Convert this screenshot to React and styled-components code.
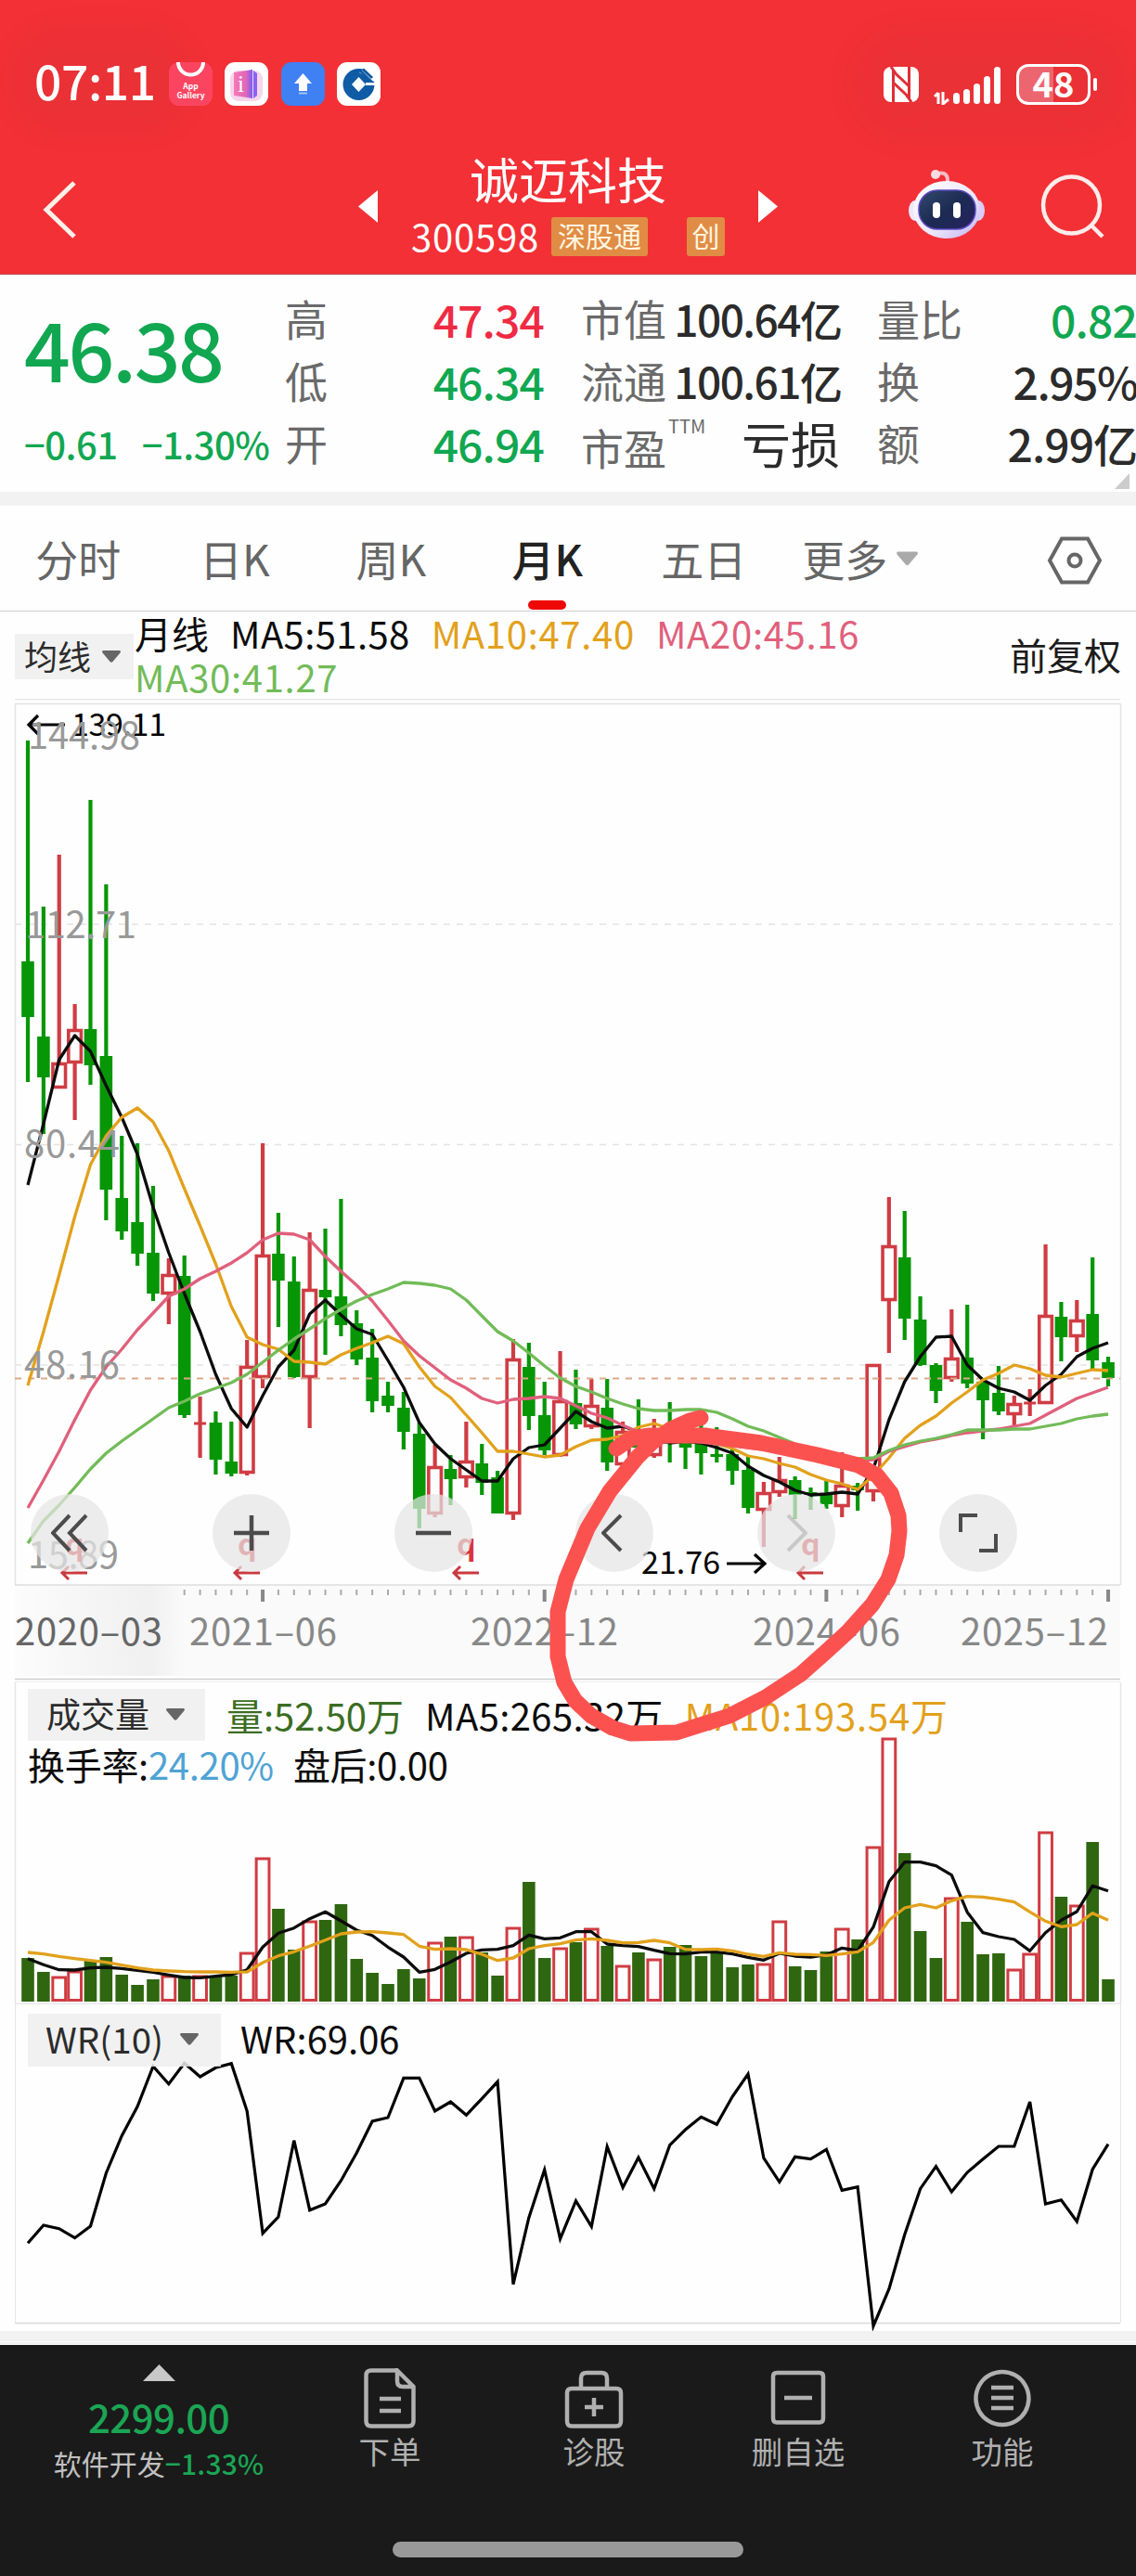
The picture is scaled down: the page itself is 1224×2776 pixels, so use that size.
import styled, { createGlobalStyle } from "styled-components";

const colors = {
    header: "#f23036",
    up: "#ef2b43",
    down: "#11a751",
    dark: "#2b2b2b",
    label: "#6a6a6a",
    candleUp: "#d03c43",
    candleDown: "#069606",
    volDown: "#2f6610",
    ma10: "#e2a11c",
    ma20: "#e0607c",
    ma30: "#72bb58",
    band: "#f2f2f2",
    nav: "#1a1a1a",
    navText: "#b0b0b0",
};

const GlobalStyle = createGlobalStyle`
    * { box-sizing: border-box; }
    body {
        margin: 0;
        background: #ffffff;
        font-family: "Noto Sans CJK SC", "Open Sans", sans-serif;
    }
    svg { display: block; }
    svg text { font-family: "Noto Sans CJK SC", "Open Sans", sans-serif; }
`;

const Page = styled.main`
    position: relative;
    width: 1224px;
    height: 2776px;
    overflow: hidden;
    background: #fefefe;
`;

/* ---------- Header ---------- */

const Header = styled.header`
    height: 296px;
    background: ${colors.header};
    color: #fff;
    border-bottom: 1px solid #b9484c;
`;

const StatusBar = styled.div`
    display: flex;
    justify-content: space-between;
    align-items: center;
    height: 160px;
    padding: 21px 42px 0 37px;
`;

const StatusGroup = styled.div`
    display: flex;
    align-items: center;
    border-radius: 40px;
    background: ${(p) => (p.$shade ? "rgba(120, 60, 60, 0.06)" : "none")};
    box-shadow: ${(p) => (p.$shade ? "0 0 40px 30px rgba(120, 60, 60, 0.06)" : "none")};
`;

const Clock = styled.div`
    width: 145px;
    height: 60px;
    margin-top: -9px;
    font-size: 51.5px;
    line-height: 60px;
    letter-spacing: -0.4px;
    font-weight: 500;
    border-radius: 30px;
    background: rgba(120, 60, 60, 0.06);
    box-shadow: 0 0 34px 24px rgba(120, 60, 60, 0.06);
`;

const AppIcons = styled.div`
    display: flex;
    gap: 13.4px;
`;

const SignalBox = styled.div`
    margin: 3px 0 0 16px;
`;

const Battery = styled.div`
    position: relative;
    width: 80px;
    height: 44px;
    margin: 0 7px 0 16px;
    border: 3.5px solid #fff;
    border-radius: 13px;
    background: linear-gradient(90deg, #ec6670 50%, transparent 50%);
    font-size: 38px;
    line-height: 33px;
    font-weight: 700;
    text-align: center;
    &::after {
        content: "";
        position: absolute;
        right: -10px;
        top: 12px;
        width: 4px;
        height: 14px;
        border-radius: 2px;
        background: #fff;
    }
`;

const TitleBar = styled.div`
    display: grid;
    grid-template-columns: 386px 452px 386px;
    height: 135px;
`;

const TitleSide = styled.div`
    display: flex;
    align-items: flex-start;
    justify-content: ${(p) => (p.$right ? "flex-end" : "flex-start")};
    gap: 60px;
    padding: ${(p) => (p.$right ? "22px 33px 0 0" : "35px 0 0 45px")};
`;

const SearchBox = styled.div`
    padding-top: 6px;
`;

const TitleCenter = styled.div`
    display: grid;
    grid-template-columns: 21px 1fr 21px;
`;

const SwitchArrow = styled.div`
    padding-top: 45px;
`;

const StockTitle = styled.div`
    display: flex;
    flex-direction: column;
    align-items: center;
`;

const StockName = styled.h1`
    margin: 0;
    font-size: 53px;
    line-height: 64px;
    font-weight: 400;
`;

const StockCode = styled.div`
    display: flex;
    align-items: center;
    font-size: 40px;
    line-height: 61px;
    letter-spacing: 0.8px;
    width: 338px;
`;

const Tag = styled.span`
    width: ${(p) => p.$w}px;
    margin-left: ${(p) => p.$left}px;
    height: 42px;
    border-radius: 3px;
    background: #e18c45;
    color: #fff6e0;
    font-size: 30px;
    line-height: 38px;
    letter-spacing: 0;
    text-align: center;
`;

/* ---------- Quote ---------- */

const Quote = styled.section`
    position: relative;
    display: grid;
    grid-template-columns: 307px 278px 320px 319px;
    height: 234px;
    padding-top: 14px;
`;

const PriceBox = styled.div`
    padding-left: 26px;
    color: ${colors.down};
`;

const Price = styled.div`
    font-size: 87.5px;
    line-height: 128px;
    font-weight: 500;
    letter-spacing: -2.4px;
`;

const Change = styled.div`
    display: flex;
    gap: 26px;
    font-size: 40px;
    line-height: 81px;
    font-weight: 500;
    letter-spacing: -0.5px;
    white-space: nowrap;
`;

const StatColumn = styled.div`
    padding-left: ${(p) => p.$left}px;
`;

const Stat = styled.div`
    display: flex;
    justify-content: space-between;
    height: 67px;
    line-height: 67px;
    white-space: nowrap;
`;

const StatLabel = styled.span`
    color: ${colors.label};
    font-size: 46px;
    line-height: 64px;
    padding-top: ${(p) => p.$drop || 0}px;
`;

const Ttm = styled.sup`
    margin-left: 2px;
    font-size: 20px;
    line-height: 20px;
    vertical-align: 34px;
`;

const StatValue = styled.span`
    color: ${(p) => p.$color || colors.dark};
    font-size: ${(p) => p.$size || 48}px;
    font-weight: ${(p) => p.$weight || 500};
    letter-spacing: ${(p) => p.$gap || 0}px;
    margin-right: ${(p) => p.$gap || 0}px;
`;

const Corner = styled.svg`
    position: absolute;
    right: 7px;
    bottom: 3px;
`;

const Band = styled.div`
    height: 15px;
    background: ${colors.band};
    border-bottom: ${(p) => (p.$edge ? "4px double #fff" : "none")};
`;

/* ---------- Period tabs ---------- */

const Tabs = styled.nav`
    display: flex;
    height: 114px;
    border-bottom: 1px solid #cfcfcf;
`;

const Tab = styled.div`
    position: relative;
    display: flex;
    justify-content: center;
    align-items: center;
    gap: 10px;
    width: 168.5px;
    font-size: 46px;
    line-height: 113px;
    font-weight: ${(p) => (p.$active ? 500 : 400)};
    color: ${(p) => (p.$active ? "#222" : "#666")};
    &::after {
        content: "";
        display: ${(p) => (p.$active ? "block" : "none")};
        position: absolute;
        bottom: 1px;
        left: 63px;
        width: 41px;
        height: 10px;
        border-radius: 5px;
        background: #ee0808;
    }
`;

const Settings = styled.div`
    margin: 33px 0 0 117px;
`;

/* ---------- Indicator rows ---------- */

const Indicators = styled.div`
    display: flex;
    height: 94px;
    padding: 0 16px;
`;

const Selector = styled.div`
    display: flex;
    align-items: center;
    flex: none;
    width: ${(p) => p.$w}px;
    height: ${(p) => p.$h}px;
    padding-left: ${(p) => p.$pad}px;
    padding-bottom: ${(p) => p.$lift || 3}px;
    gap: ${(p) => p.$gap}px;
    margin-top: ${(p) => p.$top || 0}px;
    background: rgba(238, 238, 238, 0.85);
    color: #2c2c2c;
    font-size: ${(p) => p.$size || 36}px;
    line-height: 40px;
    white-space: nowrap;
    svg { margin-top: 3px; }
`;

const Averages = styled.div`
    display: flex;
    flex-wrap: wrap;
    align-content: flex-start;
    column-gap: 23px;
    width: 830px;
    margin-left: 1px;
    font-size: 40px;
    line-height: 46.5px;
`;

const Reading = styled.span`
    color: ${(p) => p.$color || "#0c0c0c"};
    letter-spacing: ${(p) => p.$gap || 0}px;
    white-space: nowrap;
`;

const Adjust = styled.div`
    margin-left: auto;
    font-size: 40px;
    line-height: 93px;
    white-space: nowrap;
    color: #1c1c1c;
`;

/* ---------- Chart panels: the drawing and its controls share one grid cell ---------- */

const Panel = styled.section`
    display: grid;
    grid-template-columns: 1224px;
    grid-template-rows: ${(p) => p.$h}px;
    height: ${(p) => p.$h}px;
    & > * { grid-area: 1 / 1; }
`;

const PanelHead = styled.div`
    padding: ${(p) => p.$top}px 0 0 30px;
`;

const PanelRow = styled.div`
    display: flex;
    font-size: 40px;
    height: ${(p) => p.$h}px;
    line-height: ${(p) => p.$line}px;
    gap: ${(p) => p.$gap}px;
`;

const ChartButtons = styled.div`
    display: flex;
    gap: 111.8px;
    padding: 857px 0 0 33px;
`;

const RoundButton = styled.button`
    display: flex;
    align-items: center;
    justify-content: center;
    width: 84px;
    height: 84px;
    padding: 0;
    border: none;
    border-radius: 50%;
    background: rgba(229, 229, 229, 0.72);
    color: #4c4c4c;
    svg { opacity: ${(p) => (p.$off ? 0.22 : 1)}; }
`;

const Pen = styled.svg`
    position: absolute;
    left: 0;
    top: 0;
    pointer-events: none;
`;

/* ---------- Bottom bar ---------- */

const Footer = styled.footer`
    display: flex;
    flex-direction: column;
    align-items: center;
    height: 249px;
    background: ${colors.nav};
`;

const FooterItems = styled.div`
    display: grid;
    grid-template-columns: 342px repeat(4, 220px);
    width: 1224px;
    height: 212px;
`;

const IndexBox = styled.div`
    display: flex;
    flex-direction: column;
    align-items: center;
    padding-top: 21px;
`;

const IndexValue = styled.div`
    margin-top: 8px;
    color: #1ba554;
    font-size: 42px;
    line-height: 60px;
    font-weight: 500;
    letter-spacing: -0.6px;
`;

const IndexName = styled.div`
    color: #c0c0c0;
    font-size: 30px;
    line-height: 38px;
    margin-top: 1px;
    white-space: nowrap;
    span { color: #1ba554; font-weight: 500; letter-spacing: 0.2px; }
`;

const FooterItem = styled.div`
    display: flex;
    flex-direction: column;
    align-items: center;
    margin-left: -32px;
    margin-right: 32px;
    padding-top: 25px;
    color: ${colors.navText};
    font-size: 33.5px;
    line-height: 44px;
    svg { margin-bottom: 1px; }
`;

const HomeBar = styled.div`
    width: 378px;
    height: 17px;
    border-radius: 9px;
    background: #999;
`;

/* ---------- Data ---------- */

const X0 = 30;
const STEP = 16.87;
const xAt = (i) => X0 + STEP * i;

// [rising, high, body top, body bottom, low]
const candles = [
    [0, 798, 1036, 1096, 1166], [0, 977, 1117, 1161, 1222], [1, 921, 1145, 1173, 1173], [1, 1082, 1109, 1146, 1207],
    [0, 862, 1109, 1148, 1169], [0, 953, 1138, 1282, 1315], [0, 1224, 1291, 1327, 1336], [0, 1232, 1317, 1351, 1364],
    [0, 1278, 1350, 1394, 1402], [1, 1356, 1373, 1395, 1427], [0, 1353, 1375, 1525, 1528], [1, 1505, 1534, 1534, 1571],
    [0, 1521, 1533, 1573, 1589], [0, 1532, 1575, 1588, 1591], [1, 1444, 1472, 1588, 1590], [1, 1232, 1352, 1485, 1496],
    [0, 1307, 1351, 1380, 1430], [0, 1354, 1381, 1484, 1485], [1, 1328, 1389, 1485, 1539], [0, 1324, 1390, 1398, 1460],
    [0, 1292, 1397, 1428, 1440], [0, 1412, 1426, 1465, 1471], [0, 1432, 1463, 1510, 1522], [0, 1489, 1504, 1515, 1522],
    [0, 1500, 1517, 1543, 1562], [0, 1533, 1545, 1626, 1647], [1, 1557, 1580, 1632, 1635], [0, 1568, 1583, 1594, 1622],
    [1, 1532, 1574, 1593, 1603], [0, 1556, 1577, 1598, 1611], [0, 1585, 1592, 1631, 1631], [1, 1443, 1464, 1632, 1638],
    [0, 1447, 1473, 1526, 1541], [0, 1489, 1525, 1563, 1568], [1, 1456, 1509, 1569, 1570], [0, 1476, 1512, 1535, 1540],
    [1, 1486, 1514, 1538, 1540], [0, 1486, 1517, 1576, 1585], [1, 1532, 1542, 1579, 1582], [0, 1508, 1540, 1560, 1577],
    [1, 1529, 1547, 1569, 1571], [0, 1511, 1543, 1556, 1576], [0, 1547, 1553, 1560, 1583], [0, 1533, 1556, 1566, 1589],
    [0, 1538, 1567, 1570, 1576], [0, 1560, 1567, 1585, 1600], [0, 1568, 1584, 1625, 1631], [1, 1597, 1608, 1628, 1667],
    [1, 1570, 1594, 1609, 1613], [0, 1591, 1595, 1611, 1637], [0, 1603, 1608, 1611, 1627], [0, 1596, 1609, 1621, 1626],
    [1, 1565, 1600, 1624, 1635], [0, 1598, 1601, 1606, 1628], [1, 1470, 1470, 1608, 1618], [1, 1290, 1342, 1402, 1458],
    [0, 1305, 1355, 1421, 1444], [0, 1397, 1422, 1471, 1472], [0, 1469, 1471, 1499, 1512], [1, 1411, 1463, 1486, 1489],
    [0, 1406, 1463, 1491, 1496], [0, 1487, 1489, 1509, 1551], [0, 1472, 1501, 1521, 1525], [1, 1504, 1512, 1525, 1537],
    [1, 1497, 1512, 1512, 1526], [1, 1341, 1417, 1513, 1513], [0, 1403, 1419, 1441, 1467], [1, 1401, 1422, 1441, 1457],
    [0, 1355, 1416, 1466, 1475], [0, 1462, 1468, 1485, 1494],
];

const ma5 = [1277, 1211, 1142, 1116, 1133, 1170, 1204, 1244, 1301, 1350, 1394, 1435, 1481, 1518, 1538, 1504, 1473, 1455, 1416, 1401, 1417, 1432, 1438, 1466, 1495, 1533, 1556, 1572, 1584, 1596, 1596, 1572, 1560, 1557, 1539, 1521, 1532, 1539, 1537, 1543, 1547, 1555, 1553, 1555, 1560, 1566, 1580, 1590, 1597, 1606, 1611, 1610, 1608, 1610, 1583, 1530, 1489, 1462, 1441, 1440, 1471, 1487, 1496, 1500, 1509, 1493, 1481, 1462, 1453, 1447];
const ma10 = [1493, 1435, 1374, 1311, 1255, 1224, 1204, 1194, 1209, 1240, 1281, 1321, 1362, 1408, 1441, 1449, 1454, 1467, 1468, 1470, 1460, 1453, 1447, 1440, 1448, 1473, 1494, 1506, 1525, 1544, 1564, 1564, 1567, 1570, 1568, 1559, 1552, 1551, 1547, 1538, 1534, 1540, 1548, 1553, 1556, 1561, 1569, 1572, 1577, 1581, 1589, 1595, 1599, 1605, 1590, 1571, 1550, 1536, 1526, 1512, 1500, 1487, 1480, 1471, 1475, 1482, 1484, 1480, 1476, 1477];
const ma20 = [1625, 1595, 1564, 1530, 1498, 1473, 1454, 1433, 1415, 1397, 1389, 1378, 1370, 1361, 1350, 1336, 1329, 1330, 1336, 1354, 1370, 1385, 1402, 1423, 1445, 1461, 1474, 1487, 1496, 1507, 1512, 1508, 1507, 1505, 1507, 1515, 1523, 1528, 1536, 1543, 1545, 1549, 1552, 1554, 1556, 1558, 1560, 1562, 1565, 1567, 1570, 1572, 1573, 1574, 1573, 1564, 1559, 1554, 1551, 1547, 1544, 1542, 1540, 1537, 1534, 1525, 1516, 1507, 1501, 1495];
const ma30 = [1663, 1639, 1622, 1603, 1583, 1566, 1553, 1541, 1529, 1517, 1510, 1502, 1496, 1490, 1481, 1468, 1455, 1443, 1432, 1421, 1411, 1402, 1395, 1389, 1382, 1383, 1385, 1389, 1401, 1418, 1435, 1445, 1458, 1472, 1485, 1494, 1500, 1507, 1513, 1518, 1520, 1520, 1519, 1519, 1522, 1529, 1537, 1542, 1549, 1556, 1562, 1567, 1570, 1572, 1571, 1563, 1557, 1553, 1550, 1546, 1541, 1541, 1541, 1540, 1540, 1537, 1534, 1529, 1526, 1524];

const volumes = [47, 32, 27, 33, 45, 48, 29, 18, 24, 28, 28, 28, 27, 28, 53, 155, 100, 56, 87, 88, 105, 46, 31, 19, 35, 25, 64, 70, 70, 53, 28, 80, 129, 47, 58, 64, 79, 60, 39, 53, 46, 59, 61, 49, 52, 37, 40, 41, 87, 38, 34, 54, 79, 67, 167, 284, 160, 76, 47, 112, 86, 51, 52, 35, 52, 183, 113, 104, 172, 24];
const risingVolumes = [2, 3, 9, 11, 14, 15, 18, 26, 28, 31, 34, 36, 38, 40, 47, 48, 52, 54, 55, 59, 63, 64, 65, 67];
// Moving averages below are kept in thirds of a pixel from the panel origin
const volMa5 = [932, 952, 968, 969, 962, 960, 964, 970, 976, 985, 993, 994, 989, 984, 968, 895, 850, 833, 803, 781, 810, 840, 857, 895, 927, 976, 967, 943, 915, 904, 902, 890, 856, 868, 865, 845, 845, 885, 890, 893, 905, 916, 917, 911, 911, 917, 928, 937, 915, 924, 927, 920, 898, 906, 830, 683, 620, 620, 632, 662, 782, 848, 861, 870, 907, 848, 808, 780, 697, 713];
const volMa10 = [912, 917, 925, 932, 938, 944, 953, 962, 969, 972, 974, 975, 975, 976, 975, 945, 923, 910, 892, 872, 852, 846, 845, 849, 854, 892, 902, 900, 903, 918, 938, 930, 900, 890, 884, 872, 868, 873, 881, 880, 873, 881, 902, 903, 901, 907, 918, 925, 913, 918, 919, 922, 917, 910, 880, 808, 768, 757, 768, 745, 731, 733, 740, 749, 781, 811, 829, 822, 785, 808];
const wr = [772, 714, 725, 755, 717, 545, 425, 330, 200, 257, 190, 234, 205, 191, 345, 740, 687, 440, 665, 645, 570, 480, 378, 366, 238, 238, 345, 315, 358, 305, 250, 905, 690, 535, 758, 635, 718, 460, 592, 495, 596, 455, 405, 364, 388, 298, 225, 497, 574, 493, 500, 469, 601, 590, 1040, 920, 745, 596, 524, 606, 543, 500, 459, 459, 315, 645, 632, 702, 533, 452];

const polyline = (values, toY = (v) => v) => values.map((v, i) => `${xAt(i).toFixed(1)},${toY(v).toFixed(1)}`).join(" ");

const priceLabels = [
    ["144.98", 30, 807, 121],
    ["112.71", 27, 1011, 120],
    ["80.44", 26, 1247, 103],
    ["48.16", 26, 1485, 103],
    ["15.89", 30, 1690, 98],
];

const dates = [
    ["2020–03", 16, "#666"],
    ["2021–06", 204, "#888"],
    ["2022–12", 507, "#888"],
    ["2024–06", 811, "#888"],
    ["2025–12", 1035, "#888"],
];

const exRights = [66, 252, 488, 859];

/* ---------- Drawings ---------- */

const DownCaret = ({ color = "#666", w = 20, h = 13 }) => (
    <svg width={w} height={h} viewBox="0 0 20 13">
        <path d="M1 0H19Q20.500 .8 19.500 2.500L11.500 12Q10 13.500 8.500 12L.5 2.500Q-.5 .8 1 0Z" fill={color} />
    </svg>
);

const Candle = ({ index, data }) => {
    const [rising, high, top, bottom, low] = data;
    const x = xAt(index);
    if (!rising) {
        return (
            <g fill={colors.candleDown}>
                <rect x={x - 2.100} y={high} width="4.2" height={low - high} />
                <rect x={x - 6.8} y={top} width="13.6" height={bottom - top} />
            </g>
        );
    }
    return (
        <g stroke={colors.candleUp} strokeWidth="4.2" fill="none">
            <path d={`M${x} ${high}V${top}M${x} ${bottom}V${low}`} />
            {top === bottom ? (
                <path d={`M${x - 6.5} ${top}h13`} strokeWidth="3" />
            ) : (
                <rect x={x - 6.8} y={top + 1.5} width="13.6" height={bottom - top - 3} strokeWidth="3.6" />
            )}
        </g>
    );
};

const CandleChart = () => (
    <svg width="1224" height="1060" viewBox="0 753 1224 1060">
        <defs>
            <linearGradient id="axis" x1="0" x2="1">
                <stop offset="0" stopColor="#fcfcfc" />
                <stop offset="0.8" stopColor="#f0f0f0" />
                <stop offset="1" stopColor="#fafafa" />
            </linearGradient>
        </defs>
        <g stroke="#e4e4e4" strokeWidth="1.5" fill="none">
            <path d="M16 753.5H1207M16 758.5H1207M16.5 758V1708M1207.5 758V1708" />
            <path d="M16 996H1207M16 1233.5H1207M16 1471H1207" strokeDasharray="7 7" />
        </g>
        <rect x="16" y="1708" width="1191" height="98" fill="#fafafa" />
        <rect x="16" y="1708" width="182" height="98" fill="url(#axis)" />
        <path d="M16 1708H1207" stroke="#dedede" strokeWidth="1.5" />
        <path d="M16 1809.5H1207" stroke="#cfcfcf" strokeWidth="1.5" />
        <path d="M16 1812.5H1207" stroke="#ececec" />
        {candles.map((data, i) => <Candle key={i} index={i} data={data} />)}
        <path d="M16 1485.5H1207" stroke="#dba88a" strokeWidth="1.8" strokeDasharray="7 7" />
        <g fill="none" strokeWidth="3.3" strokeLinejoin="round">
            <polyline points={polyline(ma5)} stroke="#0c0c0c" />
            <polyline points={polyline(ma10)} stroke={colors.ma10} />
            <polyline points={polyline(ma20)} stroke={colors.ma20} />
            <polyline points={polyline(ma30)} stroke={colors.ma30} />
        </g>
        <g fontSize="34" fill="#000">
            <text x="77" y="793" textLength="102">139.11</text>
            <text x="691" y="1696" textLength="85">21.76</text>
        </g>
        <path d="M70 781H31M41 771L31 781L41 791M783 1685H824M813 1675L824 1685L813 1695" stroke="#000" strokeWidth="3.2" fill="none" />
        <g fontSize="40" fill="#999">
            {priceLabels.map(([text, x, y, w]) => <text key={text} x={x} y={y} textLength={w}>{text}</text>)}
        </g>
        {exRights.map((x) => (
            <g key={x}>
                <text x={x + 4} y="1676" fontSize="32" fontWeight="700" fill="#d8353b">q</text>
                <path d={`M${x + 28} 1695H${x + 1}M${x + 8} 1688L${x + 1} 1695L${x + 8} 1702`} stroke="#c93a40" strokeWidth="3" fill="none" />
            </g>
        ))}
        {candles.map((_, i) => i >= 10 && (
            <rect
                key={i}
                x={xAt(i) - (i % 18 === 15 ? 2 : 1)}
                y="1713"
                width={i % 18 === 15 ? 4 : 2}
                height={i % 18 === 15 ? 13 : 6}
                fill={i % 18 === 15 ? "#888" : "#aaa"}
            />
        ))}
        <g fontSize="40">
            {dates.map(([text, x, fill]) => <text key={text} x={x} y="1773" textLength="159" fill={fill}>{text}</text>)}
        </g>
    </svg>
);

const VolumeChart = () => (
    <svg width="1224" height="347" viewBox="0 1813 1224 347">
        <path d="M16.5 1813V2160M1207.5 1813V2160M16 2159.5H1207" stroke="#e6e6e6" strokeWidth="1.5" fill="none" />
        {volumes.map((h, i) => risingVolumes.includes(i) ? (
            <rect key={i} x={xAt(i) - 6.9} y={2158 - h} width="13.8" height={h - 2.5} fill="none" stroke="#d03c43" strokeWidth="3" />
        ) : (
            <rect key={i} x={xAt(i) - 6.8} y={2157 - h} width="13.6" height={h} fill={colors.volDown} />
        ))}
        <g fill="none" strokeWidth="3.3" strokeLinejoin="round">
            <polyline points={polyline(volMa5, (v) => 1800 + v / 3)} stroke="#0c0c0c" />
            <polyline points={polyline(volMa10, (v) => 1800 + v / 3)} stroke={colors.ma10} />
        </g>
    </svg>
);

const WrChart = () => (
    <svg width="1224" height="352" viewBox="0 2160 1224 352">
        <path d="M16.5 2160V2503M1207.5 2160V2503" stroke="#e6e6e6" fill="none" />
        <path d="M16 2503.5H1207" stroke="#d9d9d9" strokeWidth="1.5" />
        <polyline points={polyline(wr, (v) => 2160 + v / 3)} fill="none" stroke="#000" strokeWidth="3.2" />
    </svg>
);

const GalleryIcon = () => (
    <svg width="47" height="47" viewBox="0 0 47 47">
        <rect width="47" height="47" rx="11" fill="#fb4560" />
        <path d="M10 0a13.5 13.5 0 0 0 27 0" fill="none" stroke="#fff" strokeWidth="4" />
        <text x="23.5" y="29" fontSize="8.5" fontWeight="700" fill="#fff" textAnchor="middle">App</text>
        <text x="23.5" y="39" fontSize="8.5" fontWeight="700" fill="#fff" textAnchor="middle">Gallery</text>
    </svg>
);

const SerifLetter = styled.text`
    && { font-family: "Liberation Serif", serif; }
`;

const InfoIcon = () => (
    <svg width="47" height="47" viewBox="0 0 47 47">
        <defs>
            <linearGradient id="book" x1="0" x2="1">
                <stop offset="0" stopColor="#f978b4" />
                <stop offset="0.65" stopColor="#e068b8" />
                <stop offset="1" stopColor="#7a5cf5" />
            </linearGradient>
        </defs>
        <rect width="47" height="47" rx="11" fill="#fff" />
        <rect x="6" y="9" width="35" height="33" rx="9" fill="#f6d6ec" />
        <path d="M10 11L30 8V39L10 36Z" fill="url(#book)" />
        <path d="M31 9L35 12V36L31 39Z" fill="#8a63f2" />
        <SerifLetter x="14" y="32" fontSize="25" fill="#fff">i</SerifLetter>
    </svg>
);

const UploadIcon = () => (
    <svg width="47" height="47" viewBox="0 0 47 47">
        <rect width="47" height="47" rx="11" fill="#3f80f3" />
        <path d="M23.5 12L33 23H28V31H19V23H14Z" fill="#fff" />
        <path d="M19 33.5h9" stroke="#a9c8ff" strokeWidth="1.8" />
    </svg>
);

const BankIcon = () => (
    <svg width="47" height="47" viewBox="0 0 47 47">
        <rect width="47" height="47" rx="11" fill="#fff" />
        <circle cx="23.5" cy="24" r="17" fill="#0f5ba5" />
        <path d="M23.5 16L31 24L23.5 32L16 24Z" fill="#fff" />
        <path d="M24 11L44 23.5V7H30Z" fill="#fff" />
        <path d="M28 7.5L38 17M24 8L36 20" stroke="#0f5ba5" strokeWidth="3" />
        <path d="M31 23.5H42" stroke="#fff" strokeWidth="3" />
    </svg>
);

const NfcIcon = () => (
    <svg width="38" height="38" viewBox="0 0 38 38">
        <rect width="38" height="38" rx="8" fill="#fff" />
        <path d="M10.5 38V5L27.500 21M27.500 0V33L10.500 17" fill="none" stroke="#e02e35" strokeWidth="3" />
        <path d="M8 0L13 7M25 31L30 38" stroke="#e02e35" strokeWidth="3" />
    </svg>
);

const SignalIcon = () => (
    <svg width="73" height="42" viewBox="0 0 73 42">
        <path d="M5 41V29M1 33L5 29M10 28V41L16 36" fill="none" stroke="#fff" strokeWidth="3" />
        <g fill="#fff">
            <rect x="21" y="29" width="7" height="12" rx="3.5" />
            <rect x="32" y="25" width="7" height="16" rx="3.5" />
            <rect x="43" y="19" width="7" height="22" rx="3.5" />
            <rect x="54" y="11" width="7" height="30" rx="3.5" />
            <rect x="65" y="1" width="7" height="40" rx="3.5" />
        </g>
    </svg>
);

const RobotIcon = () => (
    <svg width="82" height="76" viewBox="0 0 82 76">
        <defs>
            <linearGradient id="shell" x1="0" x2="1" y2="1">
                <stop offset="0" stopColor="#fff" />
                <stop offset="0.6" stopColor="#ece6fb" />
                <stop offset="1" stopColor="#bfaef2" />
            </linearGradient>
            <linearGradient id="visor" x1="0" x2="1" y2="1">
                <stop offset="0" stopColor="#34496f" />
                <stop offset="0.5" stopColor="#1c2b52" />
                <stop offset="1" stopColor="#26225f" />
            </linearGradient>
        </defs>
        <path d="M31 5Q43 2 42 15" stroke="#f7b9c4" strokeWidth="4" fill="none" />
        <circle cx="29" cy="6" r="5" fill="#fbdce2" />
        <ellipse cx="7" cy="45" rx="7" ry="11" fill="#efe8fb" />
        <ellipse cx="75" cy="45" rx="7" ry="11" fill="#d8cdf6" />
        <ellipse cx="41" cy="44" rx="36" ry="31" fill="url(#shell)" />
        <rect x="11" y="23" width="61" height="42" rx="20" fill="url(#visor)" stroke="#5a48c0" strokeWidth="1.5" />
        <rect x="26" y="36" width="8" height="17" rx="4" fill="#fff" />
        <rect x="48" y="36" width="8" height="17" rx="4" fill="#fff" />
    </svg>
);

const SearchIcon = () => (
    <svg width="70" height="70" viewBox="0 0 70 70">
        <circle cx="33.5" cy="33" r="30.5" fill="none" stroke="#ffeceb" strokeWidth="4.5" />
        <path d="M55 55L67 67" stroke="#ffeceb" strokeWidth="4.5" />
    </svg>
);

const strokeProps = { fill: "none", stroke: "currentColor", strokeWidth: 4.5 };

const footerItems = [
    {
        label: "下单",
        icon: <path d="M35 2.5H9Q3.5 2.5 3.5 8V57Q3.5 62.5 9 62.5H49Q54.5 62.5 54.5 57V20L37 2.5V14Q37 20 43 20H54M18 33H41M18 46H41" />,
    },
    {
        label: "诊股",
        icon: <path d="M15 22V11Q15 5 21 5H37Q43 5 43 11V22M5 22H53Q58 22 58 27V57Q58 62.5 53 62.5H5Q0 62.5 0 57V27Q0 22 5 22ZM29 32V52M19 42H39" />,
    },
    {
        label: "删自选",
        icon: <path d="M6 5H52Q56 5 56 9V54Q56 58.5 52 58.5H6Q2 58.5 2 54V9Q2 5 6 5ZM14 32H44" />,
    },
    {
        label: "功能",
        icon: <path d="M29 4A28.5 28.5 0 1 1 28.9 4ZM17 21H41M17 32H41M17 43H41" />,
    },
];

function App() {
    return (
        <Page>
            <GlobalStyle />
            <Header>
                <StatusBar>
                    <StatusGroup>
                        <Clock>07:11</Clock>
                        <AppIcons>
                            <GalleryIcon />
                            <InfoIcon />
                            <UploadIcon />
                            <BankIcon />
                        </AppIcons>
                    </StatusGroup>
                    <StatusGroup $shade>
                        <NfcIcon />
                        <SignalBox>
                            <SignalIcon />
                        </SignalBox>
                        <Battery>48</Battery>
                    </StatusGroup>
                </StatusBar>
                <TitleBar>
                    <TitleSide>
                        <svg width="40" height="62" viewBox="0 0 40 62">
                            <path d="M35 2L5 31L35 60" fill="none" stroke="#fff0e8" strokeWidth="5" />
                        </svg>
                    </TitleSide>
                    <TitleCenter>
                        <SwitchArrow>
                            <svg width="21" height="35" viewBox="0 0 21 35"><path d="M21 0V35L0 17.5Z" fill="#fff" /></svg>
                        </SwitchArrow>
                        <StockTitle>
                            <StockName>诚迈科技</StockName>
                            <StockCode>
                                300598
                                <Tag $w={104} $left={13}>深股通</Tag>
                                <Tag $w={41} $left={42}>创</Tag>
                            </StockCode>
                        </StockTitle>
                        <SwitchArrow>
                            <svg width="21" height="35" viewBox="0 0 21 35"><path d="M0 0V35L21 17.5Z" fill="#fff" /></svg>
                        </SwitchArrow>
                    </TitleCenter>
                    <TitleSide $right>
                        <RobotIcon />
                        <SearchBox>
                            <SearchIcon />
                        </SearchBox>
                    </TitleSide>
                </TitleBar>
            </Header>

            <Quote>
                <PriceBox>
                    <Price>46.38</Price>
                    <Change>
                        <span>−0.61</span>
                        <span>−1.30%</span>
                    </Change>
                </PriceBox>
                <StatColumn $left={0}>
                    <Stat><StatLabel>高</StatLabel><StatValue $gap={-0.9} $color={colors.up}>47.34</StatValue></Stat>
                    <Stat><StatLabel>低</StatLabel><StatValue $gap={-0.9} $color={colors.down}>46.34</StatValue></Stat>
                    <Stat><StatLabel>开</StatLabel><StatValue $gap={-0.9} $color={colors.down}>46.94</StatValue></Stat>
                </StatColumn>
                <StatColumn $left={41}>
                    <Stat><StatLabel>市值</StatLabel><StatValue $size={46} $gap={-1.5}>100.64亿</StatValue></Stat>
                    <Stat><StatLabel>流通</StatLabel><StatValue $size={46} $gap={-1.5}>100.61亿</StatValue></Stat>
                    <Stat>
                        <StatLabel $drop={5}>市盈<Ttm>TTM</Ttm></StatLabel>
                        <StatValue $size={53} $weight={400}>亏损</StatValue>
                    </Stat>
                </StatColumn>
                <StatColumn $left={40}>
                    <Stat><StatLabel>量比</StatLabel><StatValue $gap={-0.9} $color={colors.down}>0.82</StatValue></Stat>
                    <Stat><StatLabel>换</StatLabel><StatValue $gap={-1.5}>2.95%</StatValue></Stat>
                    <Stat><StatLabel>额</StatLabel><StatValue $gap={-1}>2.99亿</StatValue></Stat>
                </StatColumn>
                <Corner width="16" height="17" viewBox="0 0 16 17"><path d="M16 0V17H0Z" fill="#ccc" /></Corner>
            </Quote>
            <Band />

            <Tabs>
                <Tab>分时</Tab>
                <Tab>日K</Tab>
                <Tab>周K</Tab>
                <Tab $active>月K</Tab>
                <Tab>五日</Tab>
                <Tab>更多<DownCaret color="#aaa" w={23} h={16} /></Tab>
                <Settings>
                    <svg width="60" height="52" viewBox="0 0 60 52">
                        <path d="M16 2.5H44L57 26L44 49.5H16L3 26Z" fill="none" stroke="#666" strokeWidth="4" />
                        <circle cx="30" cy="26" r="6.5" fill="none" stroke="#666" strokeWidth="4" />
                    </svg>
                </Settings>
            </Tabs>

            <Indicators>
                <Selector $w={128} $h={49} $pad={10} $gap={12} $top={24}>均线<DownCaret /></Selector>
                <Averages>
                    <Reading>月线</Reading>
                    <Reading $gap={0.4}>MA5:51.58</Reading>
                    <Reading $gap={0.7} $color={colors.ma10}>MA10:47.40</Reading>
                    <Reading $gap={0.7} $color={colors.ma20}>MA20:45.16</Reading>
                    <Reading $gap={0.7} $color={colors.ma30}>MA30:41.27</Reading>
                </Averages>
                <Adjust>前复权</Adjust>
            </Indicators>

            <Panel $h={1060}>
                <CandleChart />
                <ChartButtons>
                    <RoundButton>
                        <svg width="40" height="44" viewBox="0 0 40 44"><path d="M20 3L2 22L20 41M38 3L20 22L38 41" fill="none" stroke="currentColor" strokeWidth="4" /></svg>
                    </RoundButton>
                    <RoundButton>
                        <svg width="40" height="40" viewBox="0 0 40 40"><path d="M20 1V39M1 20H39" stroke="currentColor" strokeWidth="4.5" /></svg>
                    </RoundButton>
                    <RoundButton>
                        <svg width="40" height="40" viewBox="0 0 40 40"><path d="M1 20H39" stroke="currentColor" strokeWidth="4.5" /></svg>
                    </RoundButton>
                    <RoundButton>
                        <svg width="28" height="44" viewBox="0 0 28 44"><path d="M21 3L2 22L21 41" fill="none" stroke="currentColor" strokeWidth="4" /></svg>
                    </RoundButton>
                    <RoundButton $off>
                        <svg width="24" height="44" viewBox="0 0 24 44"><path d="M3 3L22 22L3 41" fill="none" stroke="currentColor" strokeWidth="4" /></svg>
                    </RoundButton>
                    <RoundButton>
                        <svg width="44" height="44" viewBox="0 0 44 44"><path d="M3 21V3H21M41 23V41H23" fill="none" stroke="currentColor" strokeWidth="4" /></svg>
                    </RoundButton>
                </ChartButtons>
            </Panel>

            <Panel $h={347}>
                <VolumeChart />
                <PanelHead $top={7}>
                    <PanelRow $h={58} $line={56} $gap={23}>
                        <Selector $w={191} $h={56} $pad={20} $gap={18} $lift={5} $size={37}>成交量<DownCaret /></Selector>
                        <Reading $color="#3b6d22">量:52.50万</Reading>
                        <Reading $gap={0.4}>MA5:265.32万</Reading>
                        <Reading $gap={0.8} $color={colors.ma10}>MA10:193.54万</Reading>
                    </PanelRow>
                    <PanelRow $h={47} $line={46} $gap={21}>
                        <Reading $gap={-0.3}>换手率:<Reading $gap={-0.3} $color="#4fa3d4">24.20%</Reading></Reading>
                        <Reading $gap={-0.3}>盘后:0.00</Reading>
                    </PanelRow>
                </PanelHead>
            </Panel>

            <Panel $h={352}>
                <WrChart />
                <PanelHead $top={10}>
                    <PanelRow $h={57} $line={53} $gap={21}>
                        <Selector $w={208} $h={57} $pad={19} $gap={18} $lift={6} $size={38.5}>WR(10)<DownCaret /></Selector>
                        <Reading>WR:69.06</Reading>
                    </PanelRow>
                </PanelHead>
            </Panel>
            <Band $edge />

            <Footer>
                <FooterItems>
                    <IndexBox>
                        <svg width="35" height="18" viewBox="0 0 35 18"><path d="M17.5 0L35 18H0Z" fill="#c8c8c8" /></svg>
                        <IndexValue>2299.00</IndexValue>
                        <IndexName>软件开发<span>−1.33%</span></IndexName>
                    </IndexBox>
                    {footerItems.map(({ label, icon }) => (
                        <FooterItem key={label}>
                            <svg width="66" height="66" viewBox="-4 0 66 66" {...strokeProps}>{icon}</svg>
                            {label}
                        </FooterItem>
                    ))}
                </FooterItems>
                <HomeBar />
            </Footer>

            {/* Hand-drawn circle above the panels */}
            <Pen width="1224" height="2776" viewBox="0 0 1224 2776">
                <path
                    d="M664 1561L680 1550L700 1547L760 1547L820 1555L881 1568L925 1579L945 1590L960 1609L968 1633L969 1650L966 1676L957 1702L940 1729L914 1758L890 1780L863 1804L825 1829L786 1849L729 1867L679 1868L660 1862L637 1849L620 1833L608 1813L601 1785L601 1737L610 1702L633 1647L657 1607L687 1570L703 1554L723 1540L743 1531L755 1528"
                    fill="none"
                    stroke="#fb5250"
                    strokeWidth="17"
                    strokeLinejoin="round"
                    strokeLinecap="round"
                />
            </Pen>
        </Page>
    );
}

export default App;
